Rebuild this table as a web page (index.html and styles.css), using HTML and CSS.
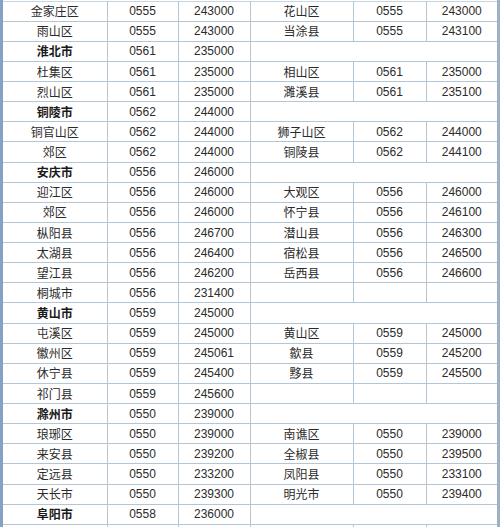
FILE: index.html
```html
<!DOCTYPE html>
<html lang="zh-CN">
<head>
<meta charset="utf-8">
<link rel="stylesheet" href="styles.css">
</head>
<body>
<div class="frame">
<table class="codes">
<colgroup><col class="c-name"><col class="c-code"><col class="c-zip"><col class="c-name2"><col class="c-code2"><col class="c-zip2"></colgroup>
<tbody>
<tr><td class="cn">金家庄区</td><td>0555</td><td>243000</td><td class="cn">花山区</td><td>0555</td><td>243000</td></tr>
<tr><td class="cn">雨山区</td><td>0555</td><td>243000</td><td class="cn">当涂县</td><td>0555</td><td>243100</td></tr>
<tr><td class="cn city">淮北市</td><td>0561</td><td>235000</td><td colspan="3"></td></tr>
<tr><td class="cn">杜集区</td><td>0561</td><td>235000</td><td class="cn">相山区</td><td>0561</td><td>235000</td></tr>
<tr><td class="cn">烈山区</td><td>0561</td><td>235000</td><td class="cn">濉溪县</td><td>0561</td><td>235100</td></tr>
<tr><td class="cn city">铜陵市</td><td>0562</td><td>244000</td><td colspan="3"></td></tr>
<tr><td class="cn">铜官山区</td><td>0562</td><td>244000</td><td class="cn">狮子山区</td><td>0562</td><td>244000</td></tr>
<tr><td class="cn">郊区</td><td>0562</td><td>244000</td><td class="cn">铜陵县</td><td>0562</td><td>244100</td></tr>
<tr><td class="cn city">安庆市</td><td>0556</td><td>246000</td><td colspan="3"></td></tr>
<tr><td class="cn">迎江区</td><td>0556</td><td>246000</td><td class="cn">大观区</td><td>0556</td><td>246000</td></tr>
<tr><td class="cn">郊区</td><td>0556</td><td>246000</td><td class="cn">怀宁县</td><td>0556</td><td>246100</td></tr>
<tr><td class="cn">枞阳县</td><td>0556</td><td>246700</td><td class="cn">潜山县</td><td>0556</td><td>246300</td></tr>
<tr><td class="cn">太湖县</td><td>0556</td><td>246400</td><td class="cn">宿松县</td><td>0556</td><td>246500</td></tr>
<tr><td class="cn">望江县</td><td>0556</td><td>246200</td><td class="cn">岳西县</td><td>0556</td><td>246600</td></tr>
<tr><td class="cn">桐城市</td><td>0556</td><td>231400</td><td></td><td></td><td></td></tr>
<tr><td class="cn city">黄山市</td><td>0559</td><td>245000</td><td colspan="3"></td></tr>
<tr><td class="cn">屯溪区</td><td>0559</td><td>245000</td><td class="cn">黄山区</td><td>0559</td><td>245000</td></tr>
<tr><td class="cn">徽州区</td><td>0559</td><td>245061</td><td class="cn">歙县</td><td>0559</td><td>245200</td></tr>
<tr><td class="cn">休宁县</td><td>0559</td><td>245400</td><td class="cn">黟县</td><td>0559</td><td>245500</td></tr>
<tr><td class="cn">祁门县</td><td>0559</td><td>245600</td><td></td><td></td><td></td></tr>
<tr><td class="cn city">滁州市</td><td>0550</td><td>239000</td><td colspan="3"></td></tr>
<tr><td class="cn">琅琊区</td><td>0550</td><td>239000</td><td class="cn">南谯区</td><td>0550</td><td>239000</td></tr>
<tr><td class="cn">来安县</td><td>0550</td><td>239200</td><td class="cn">全椒县</td><td>0550</td><td>239500</td></tr>
<tr><td class="cn">定远县</td><td>0550</td><td>233200</td><td class="cn">凤阳县</td><td>0550</td><td>233100</td></tr>
<tr><td class="cn">天长市</td><td>0550</td><td>239300</td><td class="cn">明光市</td><td>0550</td><td>239400</td></tr>
<tr><td class="cn city">阜阳市</td><td>0558</td><td>236000</td><td colspan="3"></td></tr>
<tr><td></td><td></td><td></td><td></td><td></td><td></td></tr>
</tbody>
</table>
</div>
</body>
</html>
```

FILE: styles.css
```css
html, body {
  margin: 0;
  padding: 0;
  background: #ffffff;
}

.frame {
  width: 500px;
  height: 527px;
  overflow: hidden;
  box-sizing: border-box;
  border-left: 3px solid #86a2c2;
  border-right: 3px solid #9fb0c2;
  background: #ffffff;
}

.codes {
  width: 494px;
  table-layout: fixed;
  border-collapse: collapse;
  margin-top: 0.6px;
  font-family: "Liberation Sans", Arial, "Noto Sans CJK SC", sans-serif;
  font-size: 12px;
  color: #2b2b2b;
}

.c-name { width: 104px; }
.c-code { width: 71px; }
.c-zip { width: 72px; }
.c-name2 { width: 103px; }
.c-code2 { width: 73px; }
.c-zip2 { width: 71px; }

.codes tr {
  height: 20.13px;
}

.codes td {
  border: 1px solid #b3c6d6;
  padding: 0;
  text-align: center;
  vertical-align: middle;
  line-height: 14px;
  white-space: nowrap;
}

.codes tr:first-child td {
  border-top-color: #c7d5e0;
}

.codes td:first-child {
  border-left: none;
}

.codes td:last-child {
  border-right: none;
}

.cn {
  font-family: "Noto Sans CJK SC", "Liberation Sans", sans-serif;
  font-size: 12px;
  letter-spacing: 0;
}

.city {
  font-weight: 700;
  color: #1a1a1a;
}
```
